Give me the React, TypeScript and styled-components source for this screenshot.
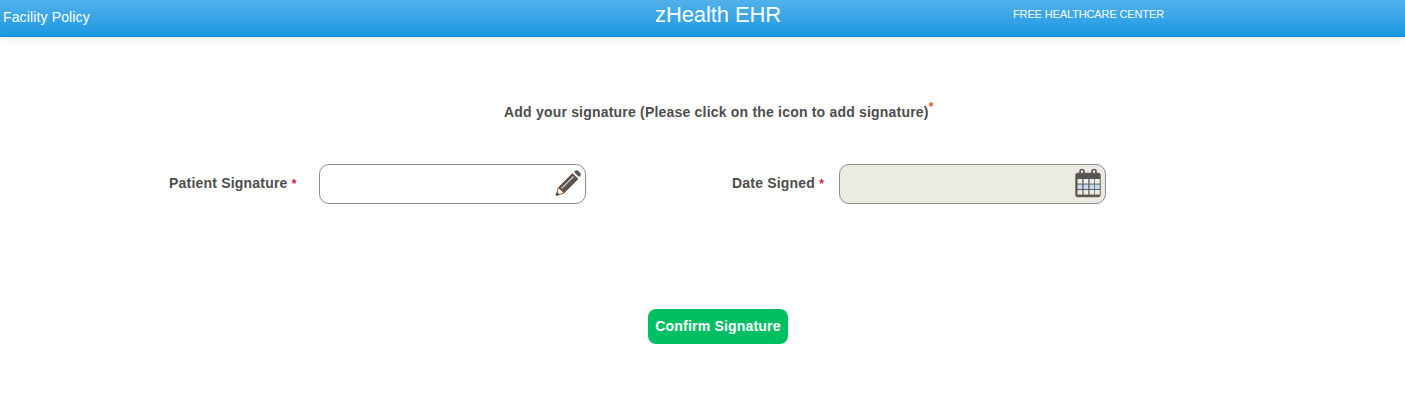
import React from "react";
import styled, { createGlobalStyle } from "styled-components";

const Global = createGlobalStyle`
  html, body { margin: 0; padding: 0; background: #fff; overflow: hidden; }
  body { font-family: "Liberation Sans", Arial, sans-serif; }
`;

const Page = styled.div`
  width: 1405px;
  height: 405px;
  display: flex;
  flex-direction: column;
`;

const Header = styled.header`
  height: 36px;
  flex: none;
  display: grid;
  grid-template-columns: 436px 577px 1fr;
  color: #fff;
  background: linear-gradient(to bottom, #51b1eb, #1e98e3);
  border-bottom: 1px solid #128bd6;
  box-shadow: 0 2px 8px rgba(0, 0, 0, 0.1);
`;

const HeaderLeft = styled.div`
  font-size: 14px;
  line-height: 16px;
  letter-spacing: 0.14px;
  padding: 9px 0 0 3px;
`;

const HeaderTitle = styled.div`
  font-size: 22px;
  line-height: 25px;
  letter-spacing: -0.1px;
  padding: 2px 0 0 219px;
`;

const HeaderRight = styled.div`
  font-size: 11px;
  line-height: 13px;
  letter-spacing: -0.13px;
  padding-top: 8px;
`;

const Main = styled.main`
  display: flex;
  flex-direction: column;
`;

const Prompt = styled.div`
  margin: 67px 0 0 504px;
  font-size: 14px;
  line-height: 16px;
  font-weight: 700;
  letter-spacing: 0.2px;
  color: #4d4d4d;
  white-space: nowrap;
`;

const Sup = styled.span`
  position: relative;
  top: -6px;
  font-size: 12px;
  line-height: 0;
  color: #f2501e;
  letter-spacing: 0;
`;

const FormRow = styled.div`
  display: flex;
  margin-top: 44px;
`;

const Field = styled.div<{ $labelWidth: number; $gap: number }>`
  display: grid;
  grid-template-columns: ${(p) => p.$labelWidth}px 267px;
  align-items: center;
  margin-left: ${(p) => p.$gap}px;
`;

const Label = styled.label`
  font-size: 14px;
  line-height: 16px;
  padding-bottom: 2px;
  font-weight: 700;
  letter-spacing: 0.2px;
  color: #4d4d4d;
  white-space: nowrap;
`;

const Req = styled.span`
  color: #e0103a;
  font-size: 12px;
  letter-spacing: 0;
`;

const InputBox = styled.div<{ $disabled?: boolean }>`
  height: 40px;
  box-sizing: border-box;
  border: 1px solid #8c8c8c;
  border-radius: 10px;
  background: ${(p) => (p.$disabled ? "#ebebe3" : "#fff")};
  display: flex;
  align-items: center;
  justify-content: flex-end;
  padding-right: 3px;
`;

const ButtonRow = styled.div`
  margin: 105px 0 0 648px;
`;

const Confirm = styled.button`
  width: 140px;
  height: 35px;
  padding: 0 0 2px;
  border: none;
  border-radius: 8px;
  background: #00bf63;
  color: #fff;
  font-family: "Liberation Sans", Arial, sans-serif;
  font-size: 14px;
  font-weight: 700;
  letter-spacing: 0.2px;
`;

const IconSlot = styled.svg`
  display: block;
  position: relative;
  top: -1px;
`;

const PencilIcon = () => (
  <IconSlot width="28" height="28" viewBox="0 0 28 28">
    <path d="M4.5 18.5 L18.5 4.5 L24 10 L10 24 Z" fill="#555" stroke="#9a5a30" strokeWidth="1" />
    <path d="M20 3 L21.6 1.6 Q22.6 0.8 23.8 1.6 L26.4 4.2 Q27.2 5.4 26.4 6.4 L25 8 Z" fill="#555" />
    <path d="M4.5 18.5 L10 24 L2 26.5 Z" fill="#f2eee8" stroke="#9a5a30" strokeWidth="1" />
    <path d="M2 26.5 L3 23 L5.5 25.5 Z" fill="#444" />
    <path d="M7.5 19.5 L19.5 7.5" stroke="#c9c9c9" strokeWidth="1.2" />
  </IconSlot>
);

const CalendarIcon = () => (
  <IconSlot width="28" height="30" viewBox="0 0 28 30">
    <rect x="1.5" y="5" width="25" height="24" rx="2" fill="#555" stroke="#8a6a4a" strokeWidth="0.6" />
    {[11, 16.5, 22].map((y) =>
      [3.5, 9.5, 15.5, 21].map((x) => (
        <rect key={`${x}-${y}`} x={x} y={y} width="4.8" height="4.6" fill={y === 16.5 ? "#c4dcee" : "#ecece8"} />
      ))
    )}
    <path d="M6 8 V3.5 Q6 1.5 8 1.5 Q10 1.5 10 3.5 V8" fill="none" stroke="#555" strokeWidth="1.6" />
    <path d="M18 8 V3.5 Q18 1.5 20 1.5 Q22 1.5 22 3.5 V8" fill="none" stroke="#555" strokeWidth="1.6" />
  </IconSlot>
);

export default function App() {
  return (
    <Page>
      <Global />
      <Header>
        <HeaderLeft>Facility Policy</HeaderLeft>
        <HeaderTitle>zHealth EHR</HeaderTitle>
        <HeaderRight>FREE HEALTHCARE CENTER</HeaderRight>
      </Header>
      <Main>
        <Prompt>
          Add your signature (Please click on the icon to add signature)<Sup>*</Sup>
        </Prompt>
        <FormRow>
          <Field $labelWidth={150} $gap={169}>
            <Label>Patient Signature <Req>*</Req></Label>
            <InputBox><PencilIcon /></InputBox>
          </Field>
          <Field $labelWidth={107} $gap={146}>
            <Label>Date Signed <Req>*</Req></Label>
            <InputBox $disabled><CalendarIcon /></InputBox>
          </Field>
        </FormRow>
        <ButtonRow>
          <Confirm>Confirm Signature</Confirm>
        </ButtonRow>
      </Main>
    </Page>
  );
}
